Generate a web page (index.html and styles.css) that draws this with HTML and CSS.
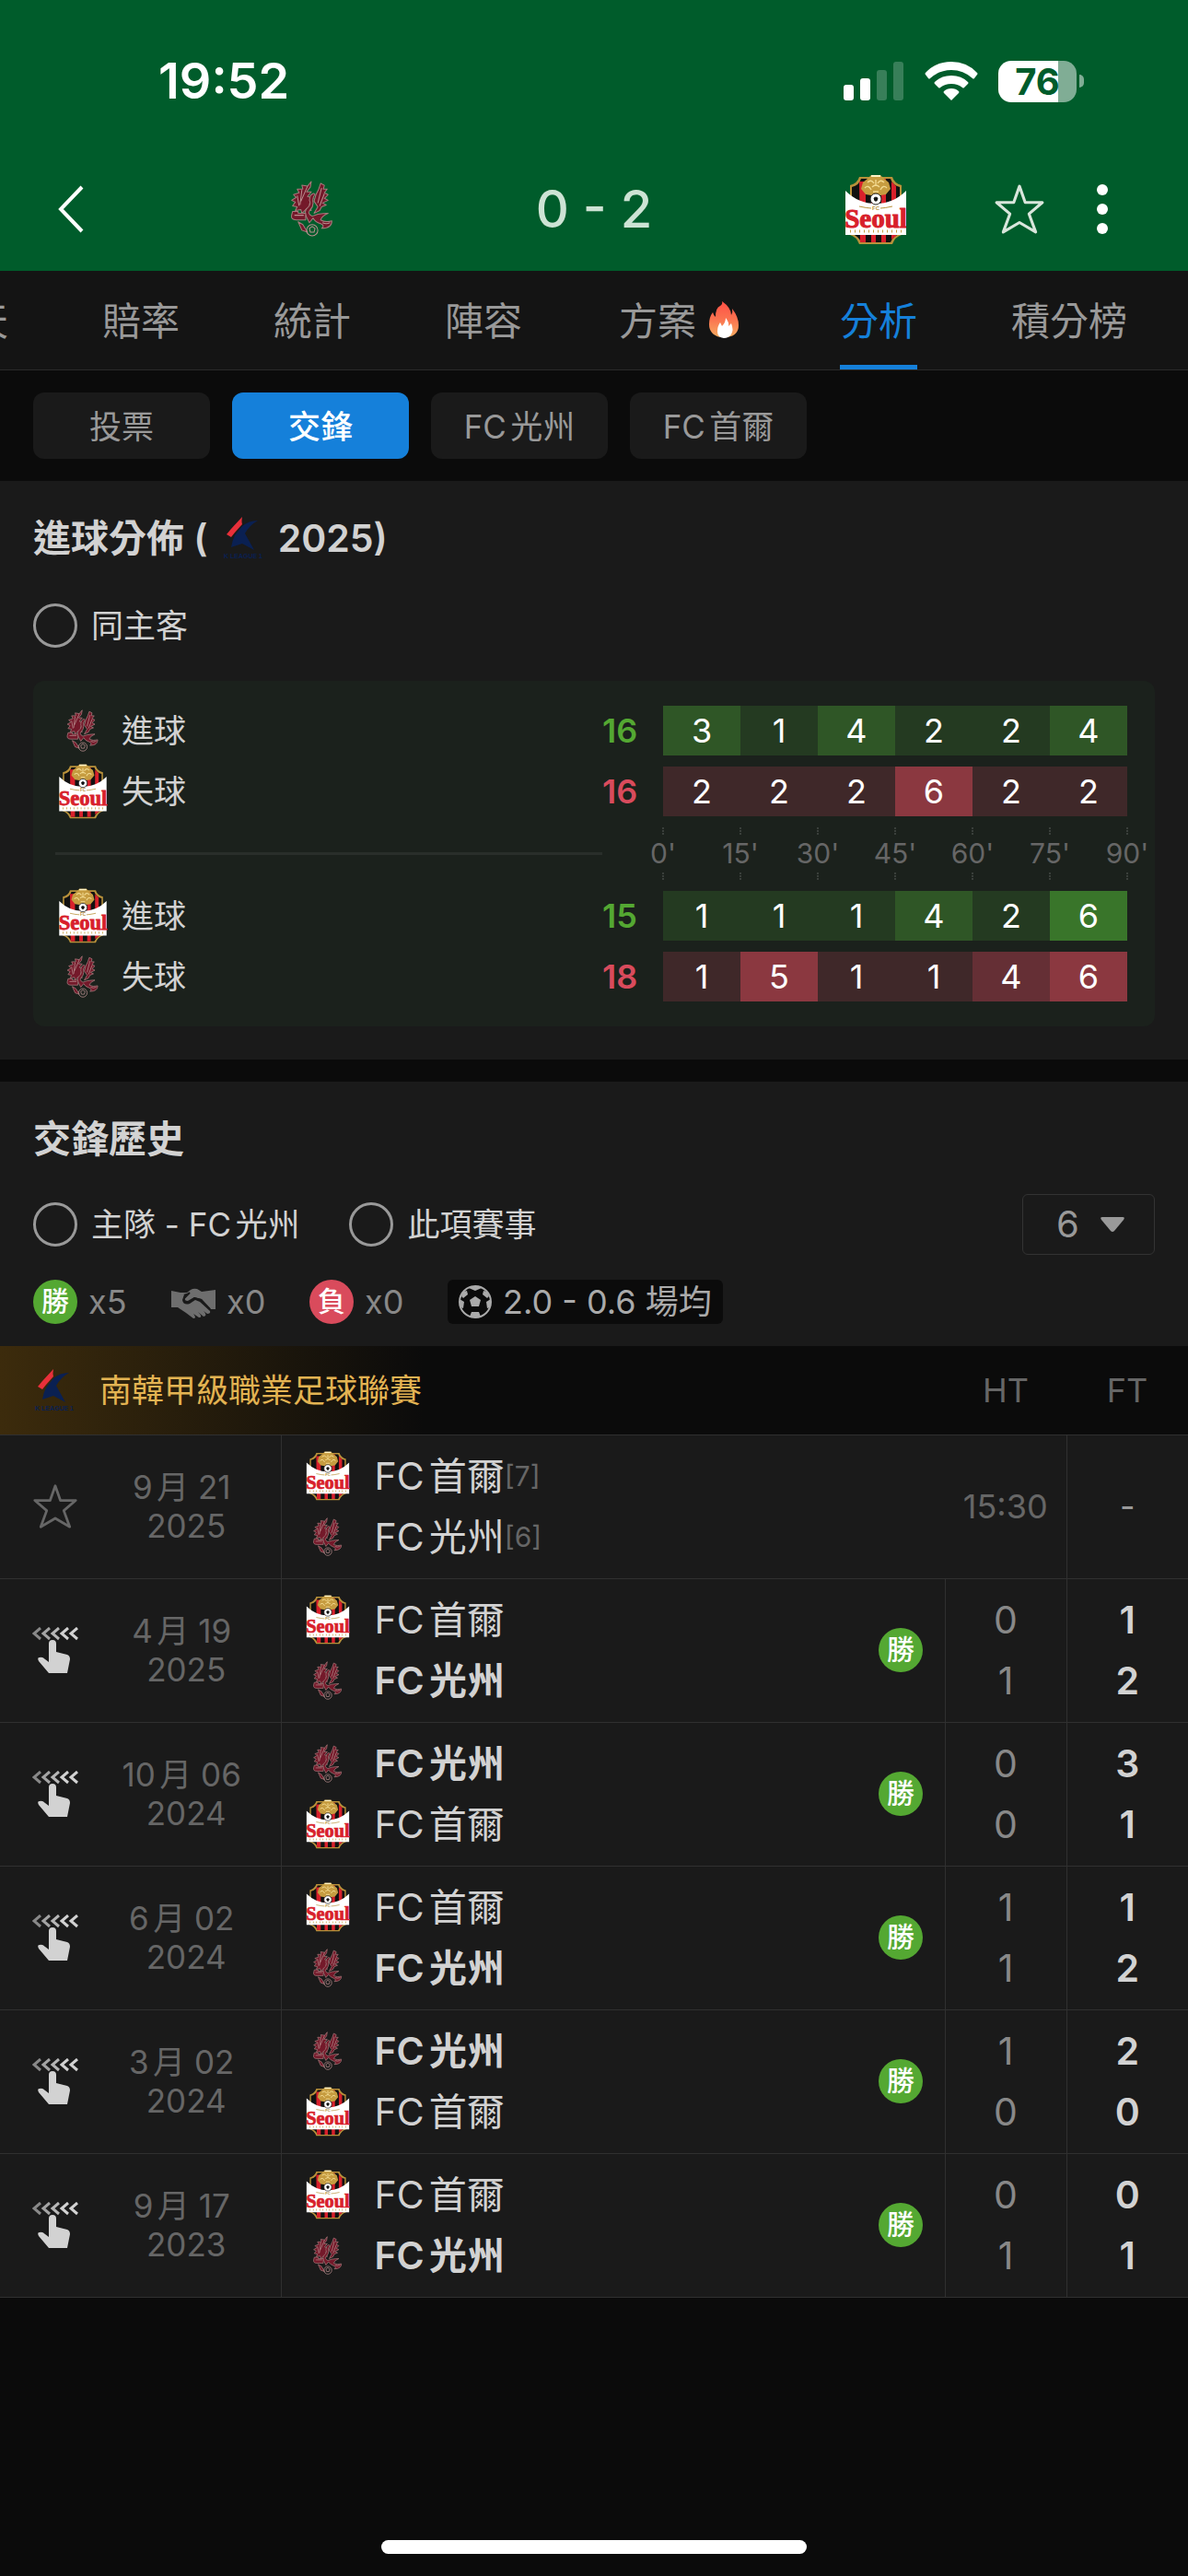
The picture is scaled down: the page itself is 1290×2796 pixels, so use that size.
FILE: index.html
```html
<!DOCTYPE html>
<html lang="zh-Hant">
<head>
<meta charset="UTF-8">
<meta name="viewport" content="width=device-width, initial-scale=1.0">
<title>FC光州 0 - 2 FC首爾</title>
<link rel="stylesheet" href="styles.css">
</head>
<body>
<svg class="sprite" aria-hidden="true">
<symbol id="gwangju" viewBox="0 0 46 60">
<g fill="#74192a" stroke="#a77b7d" stroke-width="1" stroke-linejoin="round">
<path d="M22 1L18 6L12 5L13 9L7 9L9 13L3 15L6 18L1 21L5 23L2 27L7 28L5 32L11 31L12 35L17 30L22 32L20 25L24 19L18 17L22 12L17 12L21 7Z"/>
<path d="M32 3L30 9L27 15L25 22L29 28L25 35L31 32L33 28L38 26L34 24L40 21L36 19L40 15L36 13L39 9L35 9L36 5Z"/>
<path d="M21 16Q25 12 26 15Q23 18 24 24Q24 28 21 31Q17 35 23 38L29 36Q35 35 40 35Q33 38 32 42Q37 45 44 43Q44 51 33 51Q37 48 32 46Q26 44 24 40L20 45L17 39Q13 33 19 28Q22 25 20 21Z"/>
<path d="M2 33H8V35H16V42H6Q0 42 1 37Z"/>
<path d="M8 44L13 47L18 55L12 53Z"/>
</g>
<g fill="none" stroke="#b98f8f" stroke-width="1">
<path d="M18 6L11 22M12 10L10 26M7 16L9 27M33 8L29 24M36 14L31 27M4 37H14M34 45Q38 47 42 45"/>
<circle cx="23" cy="53" r="6"/>
<path d="M20 51L23 49L26 51L25 55H21Z"/>
</g>
</symbol>
<symbol id="seoul" viewBox="0 0 66 77">
<path d="M15 3H51Q53 10 61 12V66Q54 68 51 76H15Q12 68 5 66V12Q13 10 15 3Z" fill="#b8913a"/>
<path d="M17 5H49Q51 12 59 14V65Q52 67 49 74H17Q14 67 7 65V14Q15 12 17 5Z" fill="#111"/>
<path d="M15 8H22V74H16ZM28 5H33V74H28ZM39 5H44V74H39ZM50 8L55 13V67L50 71Z" fill="#d8202b"/>
<path d="M0 18Q14 32 33 32Q52 32 66 18V66H0Z" fill="#fff"/>
<path d="M28 1H38L42 5L47 9L49 16L44 22L38 23H28L22 22L17 16L19 9L24 5Z" fill="#c69c40"/>
<path d="M28 1H38V3H28Z" fill="#fff3c4"/>
<path d="M24 9Q28 5 31 10M35 10Q38 5 42 9M21 15Q25 11 28 17M38 17Q41 11 45 15M33 6V13M29 14Q33 10 37 14M30 19H36" fill="none" stroke="#f2d990" stroke-width="1.4"/>
<circle cx="33" cy="27" r="6" fill="#fff" stroke="#222" stroke-width="1"/>
<path d="M33 25L35 26L34 29H32L31 26Z" fill="#111" stroke="#111"/>
<path d="M15 35Q24 37 28 37M38 37Q42 37 51 35" fill="none" stroke="#b8913a"/>
<text x="33" y="39" class="crest-fc">FC</text>
<text x="33" y="58" class="crest-name">Seoul</text>
<path d="M5 62H62" stroke="#c69c40" stroke-width="3" stroke-dasharray="1 4"/>
</symbol>
<symbol id="kleague" viewBox="0 0 44 46">
<path d="M21 0Q20 5 21 8L13 17L9 22L4 19L9 13Z" fill="#e8303a"/>
<path d="M21 10Q28 4 38 4Q29 9 24 18L34 36L21 29L9 33Q10 26 13 20Z" fill="#0a2052"/>
<text x="22" y="45" class="league-mark">K LEAGUE 1</text>
</symbol>
<symbol id="star" viewBox="0 0 54 54">
<path d="M27 3L33 20H51L37 32L44 51L27 41L10 51L17 32L3 20H21Z" fill="none" stroke="currentColor" stroke-width="3" stroke-linejoin="round"/>
</symbol>
<symbol id="swipe" viewBox="0 0 50 50">
<g fill="none" stroke="#d2d2d2" stroke-width="3">
<path d="M9 1L2 7L9 13" opacity=".6"/>
<path d="M19 1L12 7L19 13" opacity=".75"/>
<path d="M29 1L22 7L29 13" opacity=".85"/>
<path d="M39 1L32 7L39 13"/>
<path d="M49 1L42 7L49 13"/>
</g>
<path d="M18 18Q18 14 22 14Q26 14 26 18V27L38 30Q41 31 41 35L38 50H18L7 37Q5 33 8 33Q11 32 14 35L18 38Z" fill="#d2d2d2"/>
</symbol>
</svg>

<header class="top">
<div class="status-bar">
<span class="clock">19:52</span>
<div class="status-icons">
<svg class="signal" viewBox="0 0 66 42" fill="#fff">
<rect x="0" y="25" width="11" height="17" rx="3"/>
<rect x="18" y="18" width="11" height="24" rx="3"/>
<rect x="36" y="9" width="11" height="33" rx="3" opacity=".22"/>
<rect x="54" y="0" width="11" height="42" rx="3" opacity=".22"/>
</svg>
<svg class="wifi" viewBox="0 0 58 42" fill="#fff">
<path d="M29 0Q46 0 57 12Q58 13 57 14L54 18Q53 19 52 18Q42 9 29 9Q16 9 6 18Q5 19 4 18L1 14Q0 13 1 12Q12 0 29 0Z"/>
<path d="M29 15Q40 15 47 22Q48 23 47 24L43 28Q42 29 41 28Q36 24 29 24Q22 24 17 28Q16 29 15 28L11 24Q10 23 11 22Q18 15 29 15Z"/>
<path d="M29 29Q34 29 37 32Q38 33 37 34L29 42L21 34Q20 33 21 32Q24 29 29 29Z"/>
</svg>
<div class="battery"><span>76</span></div>
</div>
</div>
<div class="match-bar">
<button class="icon-button back" aria-label="返回">
<svg width="28" height="52" viewBox="0 0 28 52"><path d="M26 2L3 26L26 50" fill="none" stroke="#fff" stroke-width="4"/></svg>
</button>
<div class="match-score">
<svg class="crest-box"><use href="#gwangju" x="7" y="7" width="52" height="61"/></svg>
<h1>0 - 2</h1>
<svg class="crest-box"><use href="#seoul" width="66" height="77"/></svg>
</div>
<div class="match-actions">
<button class="icon-button favourite" aria-label="收藏"><svg width="56" height="56"><use href="#star"/></svg></button>
<button class="icon-button" aria-label="更多">
<svg width="12" height="54" viewBox="0 0 12 54" fill="#fff"><circle cx="6" cy="6" r="6"/><circle cx="6" cy="27" r="6"/><circle cx="6" cy="48" r="6"/></svg>
</button>
</div>
</div>
</header>

<nav class="tabs">
<a href="#">聊天</a>
<a href="#">賠率</a>
<a href="#">統計</a>
<a href="#">陣容</a>
<a href="#" class="hot">方案
<svg class="flame" viewBox="0 0 36 42">
<defs><linearGradient id="fire" x1="0" y1="0" x2="0" y2="1"><stop offset="0" stop-color="#ff4f45"/><stop offset=".5" stop-color="#fb7350"/><stop offset="1" stop-color="#f6ac60"/></linearGradient></defs>
<path d="M16 1Q26 8 26 16Q28 13 27 9Q34 18 34 27Q34 38 22 40H14Q2 37 2 26Q2 18 6 13Q7 17 9 18Q9 8 14 6Q17 4 16 1Z" fill="url(#fire)"/>
<path d="M20 19Q24 24 23 28L26 25Q29 32 26 37Q23 41 18 41Q11 40 11 34Q11 28 14 24L16 28Q20 24 20 19Z" fill="#fff"/>
</svg>
</a>
<a href="#" class="active">分析</a>
<a href="#">積分榜</a>
</nav>

<div class="sub-tabs">
<button>投票</button>
<button class="active">交鋒</button>
<button>FC光州</button>
<button>FC首爾</button>
</div>

<main>
<section class="section">
<h2>進球分佈 ( <svg class="league-logo"><use href="#kleague"/></svg> 2025)</h2>
<div class="filters">
<label class="check"><input type="checkbox" id="same-venue">同主客</label>
</div>
<div class="goals">
<table>
<colgroup><col><col class="total-col"><col class="goal-col" span="6"></colgroup>
<tr>
<th><div class="goal-team"><svg><use href="#gwangju" y="7" width="54" height="46"/></svg>進球</div></th>
<td class="scored">16</td>
<td class="g2">3</td><td class="g1">1</td><td class="g2">4</td><td class="g1">2</td><td class="g1">2</td><td class="g2">4</td>
</tr>
<tr>
<th><div class="goal-team"><svg><use href="#seoul" width="54" height="60"/></svg>失球</div></th>
<td class="conceded">16</td>
<td class="r1">2</td><td class="r1">2</td><td class="r1">2</td><td class="r3">6</td><td class="r1">2</td><td class="r1">2</td>
</tr>
<tr class="axis-row">
<td><hr></td>
<td></td>
<td colspan="6"><div class="axis"><span>0'</span><span>15'</span><span>30'</span><span>45'</span><span>60'</span><span>75'</span><span>90'</span></div></td>
</tr>
<tr>
<th><div class="goal-team"><svg><use href="#seoul" width="54" height="60"/></svg>進球</div></th>
<td class="scored">15</td>
<td class="g1">1</td><td class="g1">1</td><td class="g1">1</td><td class="g2">4</td><td class="g1">2</td><td class="g3">6</td>
</tr>
<tr>
<th><div class="goal-team"><svg><use href="#gwangju" y="7" width="54" height="46"/></svg>失球</div></th>
<td class="conceded">18</td>
<td class="r1">1</td><td class="r3">5</td><td class="r1">1</td><td class="r1">1</td><td class="r2">4</td><td class="r3">6</td>
</tr>
</table>
</div>
</section>

<section class="section history">
<h2>交鋒歷史</h2>
<div class="filters">
<label class="check"><input type="checkbox" id="home-team">主隊 - FC光州</label>
<label class="check"><input type="checkbox" id="this-league">此項賽事</label>
<div class="count">
<select aria-label="場數"><option>6</option><option>10</option><option>20</option></select>
<svg width="28" height="18" viewBox="0 0 28 18"><path d="M3 1H25Q28 1 26 4L16 16Q14 18 12 16L2 4Q0 1 3 1Z" fill="#999"/></svg>
</div>
</div>
<div class="summary">
<div class="result"><span class="badge win">勝</span>x5</div>
<div class="result">
<svg width="48" height="48" viewBox="0 0 48 48">
<path d="M0 12L10 14H17L21 11Q24 9 28 10L33 13L48 11V32H43L33 21L25 19L18 24Q13 24 15 20L20 14L13 16H0Z" fill="#6e6e6e"/>
<path d="M0 16H14L12 22Q13 28 20 26L26 22L31 24L42 34Q43 37 39 37L35 34Q40 39 35 40L29 35Q35 41 30 41L24 37Q28 42 24 42L16 36L7 30H0Z" fill="#6e6e6e"/>
<path d="M20 14L14 20Q13 24 18 24L25 20L32 22L42 32" fill="none" stroke="#1a1a1a" stroke-width="2"/>
</svg>x0</div>
<div class="result"><span class="badge lose">負</span>x0</div>
<div class="average">
<svg width="36" height="36" viewBox="0 0 36 36"><circle cx="18" cy="18" r="17" fill="none" stroke="#aaa" stroke-width="2"/><path d="M18 12L24 16L22 23H14L12 16ZM11 3L18 6L25 3L22 1H14ZM1 15L6 18L5 25L2 24ZM35 15L30 18L31 25L34 24ZM14 29H22L24 34L18 35L12 34ZM5 7L9 6L10 10L5 14L3 12ZM31 7L27 6L26 10L31 14L33 12Z" fill="#aaa"/></svg>
2.0 - 0.6 場均</div>
</div>

<table class="matches">
<colgroup><col class="mark-col"><col class="date-col"><col><col class="result-col"><col class="score-col"><col class="score-col"></colgroup>
<thead>
<tr>
<th colspan="4"><div class="league"><svg class="league-logo"><use href="#kleague"/></svg>南韓甲級職業足球聯賽</div></th>
<th>HT</th>
<th>FT</th>
</tr>
</thead>
<tbody>
<tr class="upcoming">
<td class="mark"><svg><use href="#star"/></svg></td>
<td class="date">9月 21<br>&nbsp;2025</td>
<td class="teams">
<div><svg><use href="#seoul"/></svg>FC首爾<small>[7]</small></div>
<div><svg><use href="#gwangju" y="6" height="42"/></svg>FC光州<small>[6]</small></div>
</td>
<td></td>
<td class="time">15:30</td>
<td class="ft">-</td>
</tr>
<tr>
<td class="mark"><svg><use href="#swipe"/></svg></td>
<td class="date">4月 19<br>&nbsp;2025</td>
<td class="teams">
<div><svg><use href="#seoul"/></svg>FC首爾</div>
<div class="winner"><svg><use href="#gwangju" y="6" height="42"/></svg>FC光州</div>
</td>
<td><span class="badge win">勝</span></td>
<td class="ht"><div>0</div><div>1</div></td>
<td class="ft"><div>1</div><div>2</div></td>
</tr>
<tr>
<td class="mark"><svg><use href="#swipe"/></svg></td>
<td class="date">10月 06<br>&nbsp;2024</td>
<td class="teams">
<div class="winner"><svg><use href="#gwangju" y="6" height="42"/></svg>FC光州</div>
<div><svg><use href="#seoul"/></svg>FC首爾</div>
</td>
<td><span class="badge win">勝</span></td>
<td class="ht"><div>0</div><div>0</div></td>
<td class="ft"><div>3</div><div>1</div></td>
</tr>
<tr>
<td class="mark"><svg><use href="#swipe"/></svg></td>
<td class="date">6月 02<br>&nbsp;2024</td>
<td class="teams">
<div><svg><use href="#seoul"/></svg>FC首爾</div>
<div class="winner"><svg><use href="#gwangju" y="6" height="42"/></svg>FC光州</div>
</td>
<td><span class="badge win">勝</span></td>
<td class="ht"><div>1</div><div>1</div></td>
<td class="ft"><div>1</div><div>2</div></td>
</tr>
<tr>
<td class="mark"><svg><use href="#swipe"/></svg></td>
<td class="date">3月 02<br>&nbsp;2024</td>
<td class="teams">
<div class="winner"><svg><use href="#gwangju" y="6" height="42"/></svg>FC光州</div>
<div><svg><use href="#seoul"/></svg>FC首爾</div>
</td>
<td><span class="badge win">勝</span></td>
<td class="ht"><div>1</div><div>0</div></td>
<td class="ft"><div>2</div><div>0</div></td>
</tr>
<tr>
<td class="mark"><svg><use href="#swipe"/></svg></td>
<td class="date">9月 17<br>&nbsp;2023</td>
<td class="teams">
<div><svg><use href="#seoul"/></svg>FC首爾</div>
<div class="winner"><svg><use href="#gwangju" y="6" height="42"/></svg>FC光州</div>
</td>
<td><span class="badge win">勝</span></td>
<td class="ht"><div>0</div><div>1</div></td>
<td class="ft"><div>0</div><div>1</div></td>
</tr>
</tbody>
</table>
</section>
</main>

<footer class="home-indicator"><span></span></footer>
</body>
</html>
```
FILE: styles.css
```css
* {
box-sizing: border-box;
}
body {
margin: 0;
min-height: 100vh;
display: flex;
flex-direction: column;
background-color: #0b0b0b;
color: #d2d2d2;
font-family: Inter, "Noto Sans CJK TC", sans-serif;
font-size: 36px;
line-height: 48px;
text-autospace: normal;
overflow-x: hidden;
}
svg {
display: block;
flex-shrink: 0;
}
button, select {
font: inherit;
color: inherit;
border: none;
cursor: pointer;
}
a {
color: inherit;
text-decoration: none;
}
h1, h2 {
margin: 0;
}
.sprite {
display: none;
}
.crest-name {
font: bold 29px "Liberation Serif", serif;
fill: #d8202b;
stroke: #d8202b;
stroke-width: 1px;
text-anchor: middle;
}
.crest-fc {
font: bold 6px "Liberation Sans", sans-serif;
fill: #b8913a;
text-anchor: middle;
}
.league-mark {
font: bold 7px "Liberation Sans", sans-serif;
fill: #0a2052;
text-anchor: middle;
}

/* header */
.top {
background-color: #005c2b;
color: #fff;
}
.status-bar {
display: flex;
justify-content: space-between;
align-items: center;
height: 160px;
padding: 16px 121px 0 172px;
}
.clock {
font-size: 54px;
font-weight: 600;
}
.status-icons {
display: flex;
align-items: center;
gap: 22px;
}
.signal {
width: 66px;
height: 42px;
}
.wifi {
width: 58px;
height: 42px;
}
.battery {
position: relative;
width: 85px;
height: 45px;
border-radius: 14px;
background: linear-gradient(to right, #fff 76%, #80ad95 76%);
color: #005c2b;
font-size: 40px;
font-weight: 700;
line-height: 45px;
text-align: center;
}
.battery::after {
content: "";
position: absolute;
right: -8px;
top: 15px;
width: 5px;
height: 14px;
border-radius: 0 5px 5px 0;
background-color: #80ad95;
}
.match-bar {
display: grid;
grid-template-columns: 306px 1fr 306px;
align-items: center;
height: 134px;
}
.icon-button {
display: flex;
padding: 0;
background: none;
}
.back {
padding-left: 63px;
}
.match-score {
display: flex;
justify-content: space-between;
align-items: center;
}
.match-score h1 {
font-size: 56px;
font-weight: 500;
line-height: 66px;
color: #cde3d4;
}
.crest-box {
width: 66px;
height: 77px;
}
.match-actions {
display: flex;
align-items: center;
gap: 56px;
padding-left: 95px;
}
.favourite {
color: #d9e6dc;
}

/* main tabs */
.tabs {
display: flex;
height: 108px;
margin-left: -126px;
background-color: #141414;
border-bottom: 1px solid #2b2b2b;
font-size: 42px;
color: #999;
}
.tabs a {
display: flex;
align-items: center;
flex-shrink: 0;
gap: 12px;
margin: 0 51px;
border-top: 8px solid transparent;
border-bottom: 5px solid transparent;
}
.tabs .active {
color: #1580da;
border-bottom-color: #1580da;
}
.tabs .hot {
padding: 0 6px 0 3px;
}
.flame {
width: 36px;
height: 42px;
margin-bottom: 4px;
}
.sub-tabs {
display: flex;
gap: 24px;
padding: 24px 36px;
}
.sub-tabs button {
width: 192px;
height: 72px;
padding: 2px 0 0;
border-radius: 12px;
background-color: #1a1a1a;
color: #999;
font-size: 35px;
}
.sub-tabs .active {
background-color: #1580da;
color: #fff;
font-weight: 500;
}

/* sections */
.section {
padding: 32px 36px 36px;
background-color: #1a1a1a;
}
.section h2 {
display: flex;
align-items: center;
gap: 16px;
font-size: 41px;
font-weight: 600;
line-height: 60px;
}
.league-logo {
width: 44px;
height: 46px;
}
.filters {
display: flex;
align-items: center;
gap: 54px;
margin: 41px 0 36px;
}
.check {
display: flex;
align-items: center;
gap: 15px;
font-size: 35px;
}
.check input {
appearance: none;
width: 48px;
height: 48px;
margin: 0;
border: 3px solid #999;
border-radius: 50%;
}
.check input:checked {
background-color: #1580da;
}

/* goal distribution */
.goals {
padding: 15px 30px 15px 24px;
border-radius: 12px;
background-color: #1b211c;
}
.goals table {
width: 100%;
table-layout: fixed;
border-spacing: 0 12px;
}
.goals th, .goals td {
height: 54px;
padding: 0;
text-align: center;
color: #fff;
}
.total-col {
width: 66px;
}
.goal-col {
width: 84px;
}
.goals th {
font-weight: 400;
color: #d2d2d2;
}
.goal-team {
display: flex;
align-items: center;
gap: 15px;
padding-left: 3px;
height: 54px;
font-size: 35px;
}
.goal-team svg {
width: 54px;
height: 60px;
}
.goals .scored, .goals .conceded {
text-align: left;
font-weight: 600;
color: #54a832;
}
.goals .conceded {
color: #d94b5c;
}
.g1 { background-color: #243a21; }
.g2 { background-color: #2f5626; }
.g3 { background-color: #39752a; }
.r1 { background-color: #3f2829; }
.r2 { background-color: #652f35; }
.r3 { background-color: #8b3840; }
.goals .axis-row td {
height: 57px;
}
.goals hr {
margin: 0;
border: none;
border-top: 3px solid #292e2a;
}
.axis {
display: flex;
justify-content: space-between;
}
.axis span {
display: flex;
flex-direction: column;
align-items: center;
width: 0;
font-size: 30px;
line-height: 41px;
color: #666;
}
.axis span::before, .axis span::after {
content: "";
height: 8px;
border-left: 2px dotted #3a3f3b;
}

/* head to head */
.history {
margin-top: 24px;
padding-bottom: 0;
}
.history .filters {
margin: 30px 0 27px;
}
.count {
position: relative;
margin-left: auto;
}
.count select {
appearance: none;
width: 144px;
height: 66px;
padding: 0 36px;
border: 1px solid #333;
border-radius: 6px;
background-color: #1a1a1a;
color: #999;
font-size: 40px;
}
.count svg {
position: absolute;
right: 32px;
top: 24px;
pointer-events: none;
}
.summary {
display: flex;
margin-bottom: 24px;
color: #888;
}
.result {
display: flex;
align-items: center;
gap: 12px;
width: 150px;
}
.badge {
display: block;
width: 48px;
height: 48px;
border-radius: 50%;
color: #fff;
font-size: 30px;
font-weight: 500;
line-height: 46px;
text-align: center;
}
.win {
background-color: #54a832;
}
.lose {
background-color: #d94b5c;
}
.average {
display: flex;
align-items: center;
gap: 12px;
padding: 0 12px;
border-radius: 6px;
background-color: #0b0b0b;
color: #aaa;
}
.matches {
width: calc(100% + 72px);
margin: 0 -36px;
table-layout: fixed;
border-collapse: collapse;
}
.mark-col { width: 120px; }
.date-col { width: 185px; }
.result-col { width: 96px; }
.score-col { width: 132px; }
.matches th {
height: 96px;
padding: 0;
font-weight: 400;
color: #666;
}
.matches thead tr {
background: linear-gradient(to right, #3c2b0c, #0b0b0b 460px);
}
.league {
display: flex;
align-items: center;
gap: 27px;
padding-left: 37px;
font-size: 35px;
color: #e3b352;
}
.matches td {
height: 156px;
padding: 0;
border-top: 1px solid #303030;
border-bottom: 1px solid #303030;
text-align: center;
}
.mark svg {
width: 50px;
height: 50px;
margin-left: 35px;
}
.upcoming .mark {
color: #666;
}
.mark use[href="#star"] {
width: 50px;
height: 50px;
}
.matches .date {
padding-right: 30px;
border-right: 1px solid #303030;
font-size: 35px;
line-height: 42px;
color: #666;
}
.teams div {
display: flex;
align-items: center;
height: 66px;
padding-left: 26px;
font-size: 41px;
text-align: left;
}
.teams svg {
width: 48px;
height: 54px;
margin-right: 27px;
}
.teams small {
font-size: 30px;
color: #666;
}
.teams .winner {
font-weight: 600;
}
.ht, .ft {
border-left: 1px solid #303030;
font-size: 41px;
line-height: 66px;
}
.ht {
color: #888;
}
.ft {
font-weight: 600;
}
.time {
color: #666;
}
.upcoming .ft {
font-size: 36px;
font-weight: 400;
color: #999;
}
.matches .badge {
margin-left: 24px;
}

.home-indicator {
display: flex;
justify-content: center;
margin-top: auto;
padding-bottom: 24px;
}
.home-indicator span {
width: 462px;
height: 15px;
border-radius: 8px;
background-color: #fff;
}
```
